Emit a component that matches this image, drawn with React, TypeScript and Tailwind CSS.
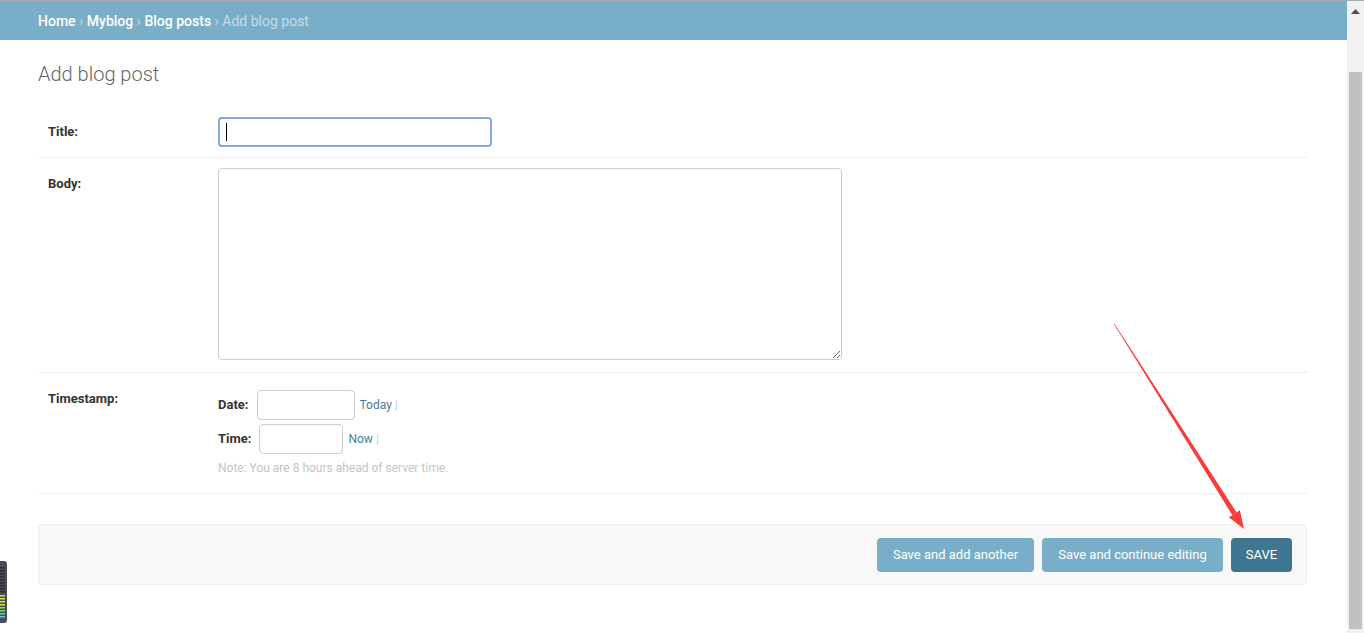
import React from 'react';

const Sep = () => <span className="mx-[3.5px] text-[#c4dce8]">›</span>;

const Arrow = () => (
    <svg className="pointer-events-none absolute left-0 top-0" width="1347" height="633">
        <polygon points="1113.7,322.8 1114.3,322.4 1236.6,511.5 1232.3,514.1" fill="#f63c3c" />
        <polygon points="1244,528 1228.9,516.3 1239.9,509.3" fill="#f63c3c" />
    </svg>
);

const Meter = () => (
    <svg className="absolute left-0 top-[560px]" width="8" height="62">
        <rect x="-4" y="0" width="11" height="62" rx="3" fill="#4a4b57" />
        {[6, 9, 12, 15, 18, 21, 24, 27, 30].map((y) => (
            <rect key={y} x="0" y={y} width="5" height="1.5" fill="#2c2d35" />
        ))}
        {[34, 37, 40, 43].map((y) => (
            <rect key={y} x="0" y={y} width="5" height="1.5" fill="#d8e04a" />
        ))}
        {[46, 49].map((y) => (
            <rect key={y} x="0" y={y} width="5" height="1.5" fill="#7fdc6a" />
        ))}
        {[52, 55].map((y) => (
            <rect key={y} x="0" y={y} width="5" height="1.5" fill="#4fd8c8" />
        ))}
    </svg>
);

export default function App() {
    return (
        <div className="flex h-[633px] w-[1364px] flex-col overflow-hidden bg-white font-['Roboto',sans-serif] text-[#333]">
            <div className="h-px w-full shrink-0 bg-[#a8a8a8]" />
            <div className="flex min-h-0 flex-1">
                <div className="relative flex min-w-0 flex-1 flex-col">
                    {/* breadcrumbs */}
                    <div className="flex h-[39px] shrink-0 items-center bg-[#79aec8] px-[38px] pt-[2px] text-[14px] text-white">
                        <span className="font-medium">Home</span>
                        <Sep />
                        <span className="font-medium">Myblog</span>
                        <Sep />
                        <span className="font-medium">Blog posts</span>
                        <Sep />
                        <span className="text-[#c4dce8]">Add blog post</span>
                    </div>

                    <div className="pl-[38px] pr-[40px]">
                        <h1 className="h-[67px] pt-[22px] text-[20px] font-light leading-[24px] text-[#666]">Add blog post</h1>

                        {/* Title */}
                        <div className="flex border-b border-[#eee] p-[10px]">
                            <label className="w-[170px] pt-[7px] text-[13px] font-bold leading-[16px] text-[#333]">Title:</label>
                            <div className="relative">
                                <input
                                    type="text"
                                    className="h-[30px] w-[274px] rounded-[4px] border-2 border-[#86a8e2] px-[6px] text-[13px] outline-none"
                                />
                                <span className="absolute left-[8px] top-[6px] h-[18px] w-px bg-black" />
                            </div>
                        </div>

                        {/* Body */}
                        <div className="flex border-b border-[#eee] px-[10px] pb-[12px] pt-[10px]">
                            <label className="w-[170px] pt-[8px] text-[13px] font-bold leading-[16px] text-[#333]">Body:</label>
                            <textarea className="block h-[192px] w-[624px] rounded-[4px] border border-[#ccc] p-[5px] text-[13px] outline-none" />
                        </div>

                        {/* Timestamp */}
                        <div className="flex border-b border-[#eee] px-[10px] pb-[10px] pt-[10px]">
                            <label className="w-[170px] pt-[8px] text-[13px] font-bold leading-[16px] text-[#333]">Timestamp:</label>
                            <div className="flex flex-col pb-[7px] pt-[6px]">
                                <div className="flex h-[30px] items-center pt-px text-[13px]">
                                    <span className="font-bold text-[#333]">Date:</span>
                                    <input type="text" className="ml-[8px] h-[30px] w-[98px] rounded-[4px] border border-[#ccc] outline-none" />
                                    <span className="ml-[5px] text-[12px] text-[#447e9b]">Today</span>
                                    <span className="ml-[3px] text-[12px] text-[#ccc]">|</span>
                                </div>
                                <div className="mt-[4px] flex h-[30px] items-center pt-px text-[13px]">
                                    <span className="font-bold text-[#333]">Time:</span>
                                    <input type="text" className="ml-[8px] h-[30px] w-[84px] rounded-[4px] border border-[#ccc] outline-none" />
                                    <span className="ml-[5px] text-[12px] text-[#447e9b]">Now</span>
                                    <span className="ml-[3px] text-[12px] text-[#ccc]">|</span>
                                </div>
                                <p className="mt-[7px] text-[12px] leading-[16px] text-[#c4c4c4]">
                                    Note: You are 8 hours ahead of server time.
                                </p>
                            </div>
                        </div>

                        {/* submit row */}
                        <div className="mt-[30px] flex h-[61px] items-center justify-end gap-[8px] rounded-[4px] border border-[#eee] bg-[#f8f8f8] px-[14px]">
                            <button className="h-[34px] w-[157px] rounded-[4px] bg-[#79aec8] text-[13px] text-white">Save and add another</button>
                            <button className="h-[34px] w-[181px] rounded-[4px] bg-[#79aec8] text-[13px] text-white">Save and continue editing</button>
                            <button className="h-[34px] w-[61px] rounded-[4px] bg-[#417690] text-[13px] uppercase text-white">Save</button>
                        </div>
                    </div>

                    <Arrow />
                    <Meter />
                </div>

                {/* scrollbar */}
                <div className="flex w-[17px] shrink-0 flex-col items-center bg-[#f1f1f1]">
                    <svg className="mt-[8px]" width="9" height="5">
                        <polygon points="4.5,0 9,5 0,5" fill="#505050" />
                    </svg>
                    <div className="mb-[4px] mt-[58px] w-[13px] flex-1 bg-[#c1c1c1]" />
                </div>
            </div>
        </div>
    );
}
